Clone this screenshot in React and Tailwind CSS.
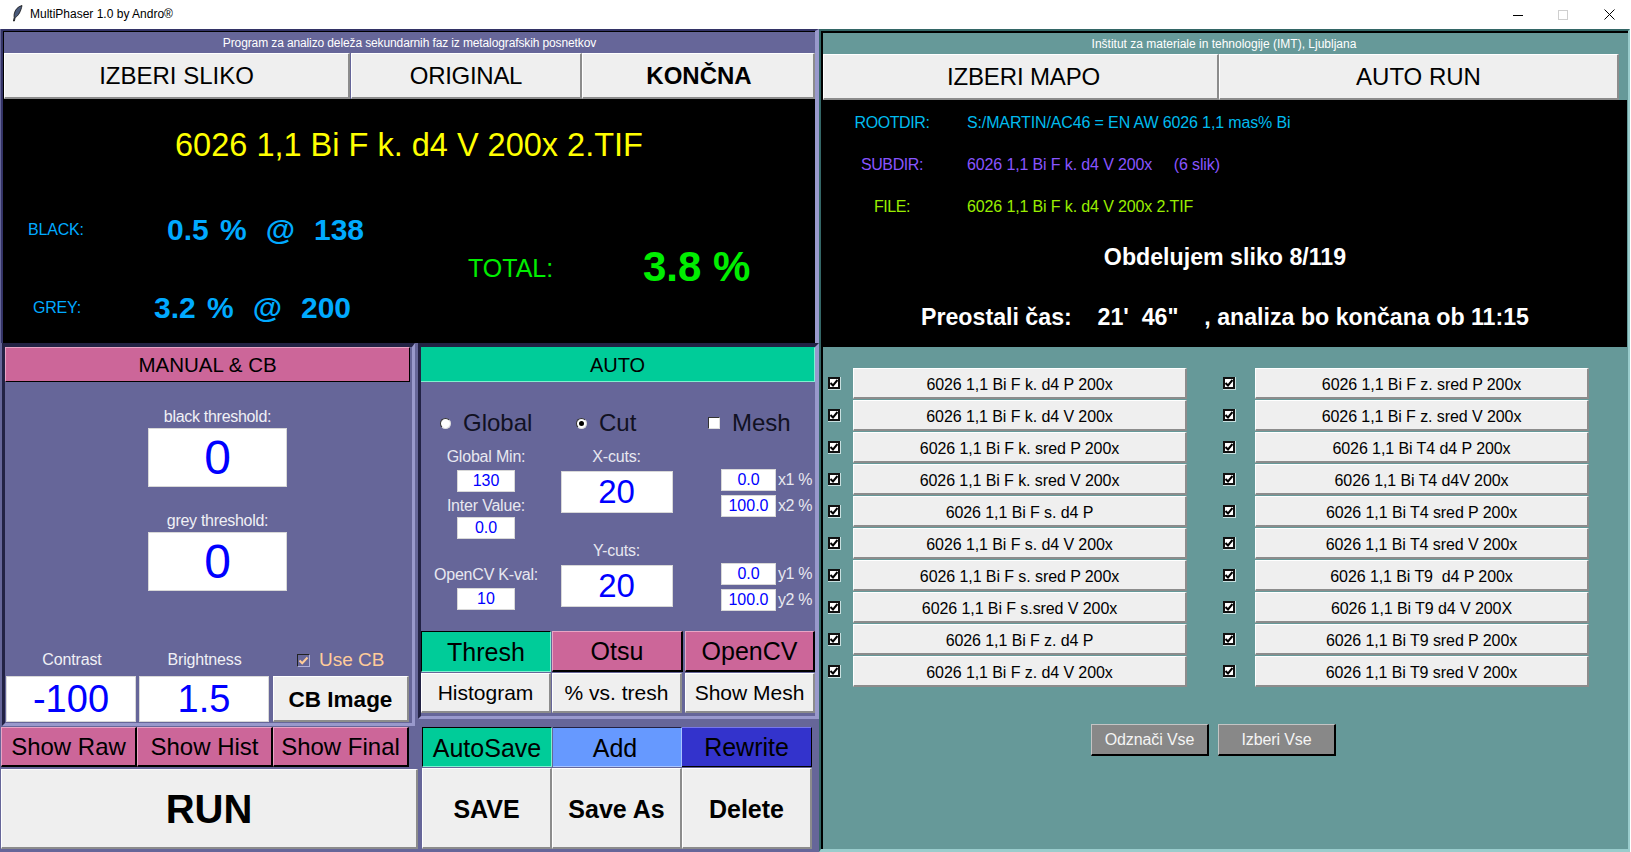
const FONT = { fontFamily: '"Liberation Sans", Arial, sans-serif' };

const GREY_BTN = "flex items-center justify-center bg-[#efefef] text-black border-t border-l border-r-2 border-b-2 border-t-white border-l-white border-r-[#8c8c8c] border-b-[#8c8c8c]";
const PINK_BTN = "flex items-center justify-center bg-[#cc6699] text-black border-t border-l border-r-2 border-b-2 border-t-[#e8a5c5] border-l-[#e8a5c5] border-r-black border-b-black";
const GREEN_BTN = "flex items-center justify-center bg-[#00cc99] text-black border-t border-l border-r border-b border-t-black border-l-black border-r-[#80f0d0] border-b-[#80f0d0]";
const ENTRY = "flex items-center justify-center bg-white text-[#0000ff] border border-[#d8d8d8]";
const LABEL = "h-[20px] pt-[2px] flex items-center text-[16px] tracking-[-0.2px] text-[#e8e8f0] whitespace-pre";

const LEFT_FILES = [
  "6026 1,1 Bi F k. d4 P 200x",
  "6026 1,1 Bi F k. d4 V 200x",
  "6026 1,1 Bi F k. sred P 200x",
  "6026 1,1 Bi F k. sred V 200x",
  "6026 1,1 Bi F s. d4 P",
  "6026 1,1 Bi F s. d4 V 200x",
  "6026 1,1 Bi F s. sred P 200x",
  "6026 1,1 Bi F s.sred V 200x",
  "6026 1,1 Bi F z. d4 P",
  "6026 1,1 Bi F z. d4 V 200x",
];
const RIGHT_FILES = [
  "6026 1,1 Bi F z. sred P 200x",
  "6026 1,1 Bi F z. sred V 200x",
  "6026 1,1 Bi T4 d4 P 200x",
  "6026 1,1 Bi T4 d4V 200x",
  "6026 1,1 Bi T4 sred P 200x",
  "6026 1,1 Bi T4 sred V 200x",
  "6026 1,1 Bi T9  d4 P 200x",
  "6026 1,1 Bi T9 d4 V 200X",
  "6026 1,1 Bi T9 sred P 200x",
  "6026 1,1 Bi T9 sred V 200x",
];

function Check() {
  return (
    <div className="w-[13px] h-[13px] shrink-0 border-r border-b border-r-[#c8e0e0] border-b-[#c8e0e0]">
      <div className="w-[12px] h-[12px] flex items-center justify-center bg-white border-2 border-[#111]">
        <svg width="8" height="8" viewBox="0 0 8 8" className="shrink-0">
          <path d="M0.5 4 L3 6.5 L7.5 1" fill="none" stroke="#000" strokeWidth="2" />
        </svg>
      </div>
    </div>
  );
}

function TintCheck() {
  return (
    <div className="w-[13px] h-[13px] shrink-0 flex items-center justify-center bg-[#666699] border border-t-[#222] border-l-[#222] border-r-[#b0b0d8] border-b-[#b0b0d8]">
      <svg width="11" height="11" viewBox="0 0 11 11" className="shrink-0">
        <path d="M1.5 5.5 L4.2 8.2 L9.5 2.5" fill="none" stroke="#ffcc99" strokeWidth="2" />
      </svg>
    </div>
  );
}

function Radio({ on }) {
  return (
    <div className="w-[11px] h-[11px] rounded-full bg-white border border-t-[#333] border-l-[#333] border-r-[#ddd] border-b-[#ddd] flex items-center justify-center shrink-0">
      {on && <div className="w-[5px] h-[5px] rounded-full bg-black" />}
    </div>
  );
}

function FileRow({ label, gapClass }) {
  return (
    <div className="h-[32px] flex items-start">
      <div className="h-[31px] flex items-center">
        <Check />
      </div>
      <div className={`${GREY_BTN} ${gapClass} w-[334px] h-[31px] pt-[3px] text-[16px] tracking-[-0.08px] whitespace-pre`}>{label}</div>
    </div>
  );
}

function SmallEntry({ value, className = "" }) {
  return <div className={`${ENTRY} h-[22px] text-[16px] ${className}`}>{value}</div>;
}

function Stat({ label, pct, value, labelClass }) {
  return (
    <div className="h-[26px] flex items-center">
      <div className={`${labelClass} pt-[2px] text-[16px] tracking-[-0.2px] text-[#00aaff]`}>{label}</div>
      <div className="flex gap-[19px] text-[30px] font-bold text-[#00aaff] whitespace-pre">
        <span className="[word-spacing:3px]">{pct}</span>
        <span>@</span>
        <span>{value}</span>
      </div>
    </div>
  );
}

function PctRow({ value, label, className }) {
  return (
    <div className={`flex items-center ml-[39px] ${className}`}>
      <SmallEntry value={value} className="w-[55px]" />
      <span className="ml-[2px] text-[16px] leading-none tracking-[-0.4px] text-[#e8e8f0] whitespace-pre">{label}</span>
    </div>
  );
}

export default function App() {
  return (
    <div style={FONT} className="w-[1631px] h-[852px] flex flex-col bg-white overflow-hidden">
      {/* Title bar */}
      <div className="h-[29px] shrink-0 flex items-center bg-white">
        <svg width="11" height="17" viewBox="0 0 11 17" className="ml-[12px] mb-[2px]">
          <path d="M10 0.5 C6 1.5 3 4.5 2.2 9 C2 10.5 2 11.5 2.2 12.5 L1.4 16 L2.4 16 L3.2 12.5 C6.5 11 9 6 10 0.5 Z" fill="#4a5a7a" stroke="#111" strokeWidth="0.8" />
        </svg>
        <span className="ml-[7px] mb-[2px] text-[12px] text-black">MultiPhaser 1.0 by Andro®</span>
        <div className="ml-auto flex items-center">
          <svg width="10" height="10" viewBox="0 0 10 10"><path d="M0 5.5 H10" stroke="#000" strokeWidth="1" /></svg>
          <svg width="10" height="10" viewBox="0 0 10 10" className="ml-[35px]"><rect x="0.5" y="0.5" width="9" height="9" fill="none" stroke="#cfcfcf" /></svg>
          <svg width="11" height="11" viewBox="0 0 11 11" className="ml-[36px] mr-[16px]"><path d="M0.5 0.5 L10.5 10.5 M10.5 0.5 L0.5 10.5" stroke="#000" strokeWidth="1" /></svg>
        </div>
      </div>

      <div className="flex-1 flex min-h-0">
        {/* Left half */}
        <div className="w-[819px] shrink-0 flex flex-col bg-[#666699]">
          <div className="ml-[1px] border-l-2 border-t-2 border-r-4 border-l-[#333366] border-t-[#333366] border-r-[#9999cc]">
            <div className="border-l border-t border-black flex flex-col">
              <div className="h-[21px] flex items-center justify-center text-[12px] tracking-[-0.12px] text-white">
                Program za analizo deleža sekundarnih faz iz metalografskih posnetkov
              </div>
              <div className="h-[46px] flex text-[24px]">
                <div className={`${GREY_BTN} w-[346px]`}>IZBERI SLIKO</div>
                <div className={`${GREY_BTN} w-[231px] ml-[1px] tracking-[-0.3px]`}>ORIGINAL</div>
                <div className={`${GREY_BTN} flex-1 pl-[2px] font-bold`}>KONČNA</div>
              </div>
              <div className="h-[244px] bg-black flex flex-col">
                <div className="h-[92px] flex items-center justify-center text-[32.5px] text-[#ffff00] pr-[1px]">
                  6026 1,1 Bi F k. d4 V 200x 2.TIF
                </div>
                <div className="flex">
                  <div className="w-[464px] pt-[25px] flex flex-col gap-[52px]">
                    <Stat label="BLACK:" pct="0.5 %" value="138" labelClass="w-[163px] pl-[24px]" />
                    <Stat label="GREY:" pct="3.2 %" value="200" labelClass="w-[150px] pl-[29px]" />
                  </div>
                  <div className="mt-[58px] h-[40px] flex items-center">
                    <div className="w-[175px] text-[25px] text-[#00ee00]">TOTAL:</div>
                    <div className="mb-[6px] text-[42px] font-bold text-[#00ee00]">3.8 %</div>
                  </div>
                </div>
              </div>
            </div>
          </div>

          <div className="flex-1 flex min-h-0">
            {/* Manual column */}
            <div className="w-[418px] shrink-0 flex flex-col">
              <div className="ml-[2px] w-[413px] h-[383px] flex flex-col border-t-4 border-l-[3px] border-r-[3px] border-b-[3px] border-t-[#222244] border-l-[#222244] border-r-[#9999cc] border-b-[#9999cc]">
                <div className="h-[35px] w-[405px] pt-[1px] flex items-center justify-center bg-[#cc6699] text-black text-[20.5px] border-b border-r border-black border-t border-l border-t-[#e8a5c5] border-l-[#e8a5c5]">
                  MANUAL &amp; CB
                </div>
                <div className="flex flex-col items-center ml-[143px] w-[139px]">
                  <div className="mt-[24px] h-[20px] pt-[2px] flex items-center whitespace-pre text-[16px] tracking-[-0.3px] text-[#f0f0f5]">black threshold:</div>
                  <div className={`${ENTRY} mt-[2px] w-[139px] h-[59px] text-[48px]`}>0</div>
                  <div className="mt-[23px] h-[20px] pt-[2px] flex items-center whitespace-pre text-[16px] tracking-[-0.3px] text-[#f0f0f5]">grey threshold:</div>
                  <div className={`${ENTRY} mt-[2px] w-[139px] h-[59px] text-[48px]`}>0</div>
                </div>
                <div className="mt-[58px] h-[20px] pt-[2px] flex items-center text-[16px] text-[#f0f0f5]">
                  <div className="w-[134px] text-center tracking-[-0.15px]">Contrast</div>
                  <div className="w-[131px] text-center tracking-[-0.15px]">Brightness</div>
                  <div className="ml-[27px]"><TintCheck /></div>
                  <div className="ml-[9px] text-[19px] text-[#ffcc99]">Use CB</div>
                </div>
                <div className="mt-[7px] h-[46px] flex">
                  <div className={`${ENTRY} ml-[1px] w-[130px] text-[38px]`}>-100</div>
                  <div className={`${ENTRY} ml-[3px] w-[130px] text-[38px]`}>1.5</div>
                  <div className={`${GREY_BTN} ml-[4px] w-[136px] pt-[3px] text-[22.5px] font-bold`}>CB Image</div>
                </div>
              </div>
              <div className="mt-[1px] ml-[1px] h-[40px] flex text-[24px]">
                <div className={`${PINK_BTN} w-[136px]`}>Show Raw</div>
                <div className={`${PINK_BTN} w-[136px]`}>Show Hist</div>
                <div className={`${PINK_BTN} w-[136px]`}>Show Final</div>
              </div>
              <div className={`${GREY_BTN} mt-[2px] ml-[1px] w-[417px] h-[80px] text-[40px] font-bold`}>RUN</div>
            </div>

            {/* Auto column */}
            <div className="flex-1 flex flex-col min-w-0">
              <div className="h-[376px] flex flex-col border-t-4 border-l-[3px] border-r-4 border-b-[3px] border-t-[#222244] border-l-[#222244] border-r-[#9999cc] border-b-[#9999cc]">
                <div className="h-[35px] pt-[1px] flex items-center justify-center bg-[#00cc99] text-black text-[20px] border-t border-b border-r border-t-[#00cc99] border-b-[#80f0d0] border-r-[#80f0d0]">
                  AUTO
                </div>
                <div className="h-[249px] grid grid-cols-[130px_131px_133px]">
                  <div className="flex flex-col items-center">
                    <div className="self-start pt-[26px] h-[56px] flex items-center ml-[19px] text-[24px] text-[#111122]">
                      <Radio /><span className="ml-[12px]">Global</span>
                    </div>
                    <div className={`${LABEL} mt-[8px]`}>Global Min:</div>
                    <SmallEntry value="130" className="mt-[4px] w-[58px]" />
                    <div className={`${LABEL} mt-[3px]`}>Inter Value:</div>
                    <SmallEntry value="0.0" className="mt-[2px] w-[58px]" />
                    <div className={`${LABEL} mt-[25px]`}>OpenCV K-val:</div>
                    <SmallEntry value="10" className="mt-[4px] w-[58px]" />
                  </div>
                  <div className="flex flex-col items-center">
                    <div className="self-start pt-[26px] h-[56px] flex items-center ml-[25px] text-[24px] text-[#111122]">
                      <Radio on /><span className="ml-[12px]">Cut</span>
                    </div>
                    <div className={`${LABEL} mt-[8px]`}>X-cuts:</div>
                    <div className={`${ENTRY} mt-[5px] w-[112px] h-[42px] text-[33px]`}>20</div>
                    <div className={`${LABEL} mt-[27px]`}>Y-cuts:</div>
                    <div className={`${ENTRY} mt-[5px] w-[112px] h-[42px] text-[33px]`}>20</div>
                  </div>
                  <div className="flex flex-col">
                    <div className="pt-[26px] h-[56px] flex items-center ml-[26px] text-[24px] text-[#111122]">
                      <div className="w-[12px] h-[12px] bg-white border border-t-[#333] border-l-[#333] border-r-[#ddd] border-b-[#ddd] shrink-0" />
                      <span className="ml-[12px]">Mesh</span>
                    </div>
                    <PctRow value="0.0" label="x1 %" className="mt-[31px]" />
                    <PctRow value="100.0" label="x2 %" className="mt-[4px]" />
                    <PctRow value="0.0" label="y1 %" className="mt-[46px]" />
                    <PctRow value="100.0" label="y2 %" className="mt-[4px]" />
                  </div>
                </div>
                <div className="h-[41px] flex text-[25px]">
                  <div className={`${GREEN_BTN} w-[130px] pt-[3px]`}>Thresh</div>
                  <div className={`${PINK_BTN} w-[131px] ml-[1px] pt-[1px]`}>Otsu</div>
                  <div className={`${PINK_BTN} w-[130px] ml-[2px] pt-[1px]`}>OpenCV</div>
                </div>
                <div className="h-[41px] pt-[1px] flex text-[21px]">
                  <div className={`${GREY_BTN} w-[130px]`}>Histogram</div>
                  <div className={`${GREY_BTN} w-[130px] ml-[1px]`}>% vs. tresh</div>
                  <div className={`${GREY_BTN} w-[130px] ml-[3px]`}>Show Mesh</div>
                </div>
              </div>
              <div className="mt-[8px] ml-[4px] h-[40px] flex text-[25px]">
                <div className={`${GREEN_BTN} w-[130px] pt-[3px]`}>AutoSave</div>
                <div className="w-[129px] ml-[1px] pt-[3px] pr-[4px] flex items-center justify-center bg-[#6699ff] text-black border-t border-t-[#222244] border-r border-b border-r-[#a8c4ff] border-b-[#a8c4ff]">Add</div>
                <div className="w-[130px] pt-[1px] flex items-center justify-center bg-[#3333cc] text-black border-t border-t-[#7777ee] border-r border-b border-r-black border-b-black">Rewrite</div>
              </div>
              <div className="mt-[1px] ml-[4px] h-[81px] flex text-[25px] font-bold">
                <div className={`${GREY_BTN} w-[130px] pt-[4px]`}>SAVE</div>
                <div className={`${GREY_BTN} w-[130px] pt-[4px]`}>Save As</div>
                <div className={`${GREY_BTN} w-[130px] pt-[4px]`}>Delete</div>
              </div>
            </div>
          </div>
        </div>

        {/* Right half */}
        <div className="flex-1 min-w-0 mr-[1px] bg-[#669999] border-l-2 border-t-2 border-r-2 border-b-[3px] border-l-[#336666] border-t-[#336666] border-r-[#99cccc] border-b-[#99cccc] flex flex-col">
          <div className="flex-1 flex flex-col border-l-2 border-t-2 border-black">
            <div className="h-[21px] flex items-center justify-center text-[12px] text-white pr-[3px]">
              Inštitut za materiale in tehnologije (IMT), Ljubljana
            </div>
            <div className="h-[46px] flex text-[24px]">
              <div className={`${GREY_BTN} w-[396px] pl-[6px] tracking-[-0.15px]`}>IZBERI MAPO</div>
              <div className={`${GREY_BTN} w-[400px]`}>AUTO RUN</div>
            </div>
            <div className="h-[247px] w-[804px] bg-black flex flex-col">
              <div className="pt-[2px] h-[127px]">
                <div className="h-[42px] flex items-center text-[16px] tracking-[-0.13px] text-[#00bbee]">
                  <div className="w-[138px] text-center tracking-[-0.4px]">ROOTDIR:</div>
                  <div className="ml-[6px]">S:/MARTIN/AC46 = EN AW 6026 1,1 mas% Bi</div>
                </div>
                <div className="h-[42px] flex items-center text-[16px] tracking-[-0.13px] text-[#8855ff]">
                  <div className="w-[138px] text-center tracking-[-0.4px]">SUBDIR:</div>
                  <div className="ml-[6px] whitespace-pre">6026 1,1 Bi F k. d4 V 200x     (6 slik)</div>
                </div>
                <div className="h-[42px] flex items-center text-[16px] tracking-[-0.13px] text-[#99ee00]">
                  <div className="w-[138px] text-center tracking-[-0.4px]">FILE:</div>
                  <div className="ml-[6px]">6026 1,1 Bi F k. d4 V 200x 2.TIF</div>
                </div>
              </div>
              <div className="h-[60px] flex items-center justify-center text-[23.2px] font-bold text-white">Obdelujem sliko 8/119</div>
              <div className="h-[60px] flex items-center justify-center text-[23.2px] font-bold text-white whitespace-pre">Preostali čas:    21'  46"    , analiza bo končana ob 11:15</div>
            </div>
            <div className="pt-[21px] pl-[5px] flex">
              <div className="flex flex-col">
                {LEFT_FILES.map((f) => <FileRow key={f} label={f} gapClass="ml-[12px]" />)}
              </div>
              <div className="flex flex-col ml-[36px]">
                {RIGHT_FILES.map((f) => <FileRow key={f} label={f} gapClass="ml-[19px]" />)}
              </div>
            </div>
            <div className="mt-[36px] ml-[268px] flex gap-[9px] text-[16px] tracking-[-0.1px] text-[#f4f4f4]">
              {["Odznači Vse", "Izberi Vse"].map((t) => (
                <div key={t} className="w-[118px] h-[32px] pt-[1px] flex items-center justify-center bg-[#888888] border-t border-l border-r-2 border-b-2 border-t-[#c4c4c4] border-l-[#c4c4c4] border-r-black border-b-black">{t}</div>
              ))}
            </div>
          </div>
        </div>
      </div>
    </div>
  );
}
